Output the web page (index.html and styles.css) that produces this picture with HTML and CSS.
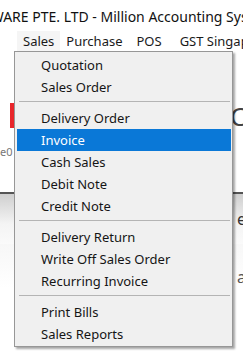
FILE: index.html
```html
<!DOCTYPE html>
<html lang="en">
<head>
  <meta charset="UTF-8">
  <meta name="viewport" content="width=device-width, initial-scale=1.0">
  <title>Sales Menu</title>
  <link rel="stylesheet" href="styles.css">
</head>
<body>

  <div class="window">
    <div class="title-bar">SOFTWARE PTE. LTD - Million Accounting System</div>

    <div class="menu-bar">
      <span class="menu-item open">Sales</span>
      <span class="menu-item">Purchase</span>
      <span class="menu-item pos">POS</span>
      <span class="menu-item gst">GST Singapore</span>
    </div>

    <div class="content">
      <div class="banner">
        <div class="logo-strip"></div>
        <div class="heading">Ce</div>
      </div>
      <div class="caption">:e0</div>
      <div class="toolbar">
        <span class="tool-text">e</span>
      </div>
      <div class="panel">
        <span class="panel-text">a</span>
      </div>
    </div>

    <!-- dropdown menu over the page -->
    <div class="dropdown">
      <div class="drop-item">Quotation</div>
      <div class="drop-item">Sales Order</div>
      <div class="separator"></div>
      <div class="drop-item">Delivery Order</div>
      <div class="drop-item active">Invoice</div>
      <div class="drop-item">Cash Sales</div>
      <div class="drop-item">Debit Note</div>
      <div class="drop-item">Credit Note</div>
      <div class="separator"></div>
      <div class="drop-item">Delivery Return</div>
      <div class="drop-item">Write Off Sales Order</div>
      <div class="drop-item">Recurring Invoice</div>
      <div class="separator"></div>
      <div class="drop-item">Print Bills</div>
      <div class="drop-item">Sales Reports</div>
    </div>
  </div>

</body>
</html>
```

FILE: styles.css
```css
* {
  box-sizing: border-box;
  margin: 0;
  padding: 0;
}

body {
  background: white;
  font-family: "Noto Sans", "Open Sans", sans-serif;
  font-size: 13px;
  color: #1a1a1a;
}

.window {
  position: relative;
  width: 243px;
  height: 355px;
  overflow: hidden;
  background: white;
}

.title-bar {
  height: 31px;
  line-height: 34px;
  font-size: 14px;
  white-space: nowrap;
  text-indent: -43px;
  color: #111;
}

.menu-bar {
  display: flex;
  height: 21px;
  line-height: 21px;
  padding-left: 17px;
  white-space: nowrap;
}

.menu-item {
  padding: 0 6px;
}

.menu-item.open {
  background: #f5f5f5;
}

.menu-item.pos {
  margin-left: 2px;
}

.menu-item.gst {
  margin-left: 6px;
}

.content {
  display: flex;
  flex-direction: column;
}

.banner {
  display: flex;
  justify-content: space-between;
  align-items: center;
  height: 25px;
  margin-top: 51px;
}

.logo-strip {
  width: 30px;
  height: 25px;
  margin-left: 10px;
  background: #e8262b;
}

.heading {
  font-size: 26px;
  color: #444;
  margin-right: -18px;
}

.caption {
  height: 20px;
  margin-top: 16px;
  font-size: 11px;
  color: #777;
  text-indent: -3px;
}

.toolbar {
  display: flex;
  justify-content: flex-end;
  align-items: center;
  height: 52px;
  margin-top: 28px;
  border-top: 2px solid #555;
  background: linear-gradient(#cfcfcf, #f4f4f4 60%, #fafafa);
}

.tool-text {
  font-size: 16px;
  color: #333;
  margin-right: -3px;
}

.panel {
  display: flex;
  justify-content: flex-end;
  height: 110px;
  padding-top: 22px;
  background: linear-gradient(#f7f7f7, white 40%);
}

.panel-text {
  font-size: 16px;
  color: #555;
  margin-right: -3px;
}

.dropdown {
  position: absolute;
  left: 14px;
  top: 51px;
  width: 219px;
  padding: 2px 1px 1px 2px;
  background: #f0f0f0;
  border: 1px solid #979797;
  box-shadow: 2px 2px 2px rgba(0, 0, 0, 0.35);
}

.drop-item {
  height: 22px;
  line-height: 22px;
  padding-left: 24px;
  white-space: nowrap;
  color: #151515;
}

.drop-item.active {
  background: #0a78d7;
  color: white;
}

.separator {
  height: 9px;
  padding-top: 3px;
}

.separator::after {
  content: "";
  display: block;
  height: 1px;
  margin: 0 1px 0 2px;
  background: #b4b4b4;
}
```
